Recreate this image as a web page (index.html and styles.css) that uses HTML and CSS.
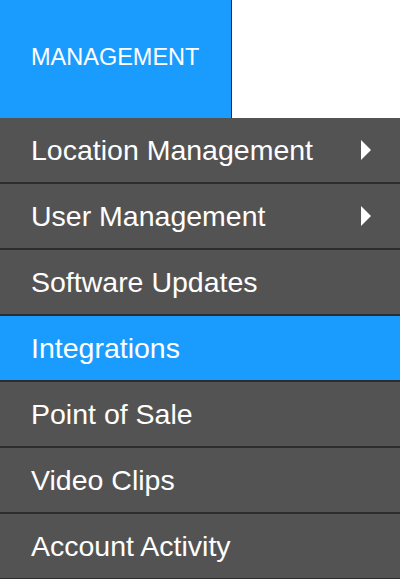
FILE: index.html
```html
<!DOCTYPE html>
<html lang="en">
<head>
<meta charset="utf-8">
<title>Management menu</title>
<link rel="stylesheet" href="styles.css">
</head>
<body>
  <div class="nav-tab">MANAGEMENT</div>
  <ul class="menu">
    <li class="menu-item"><span>Location Management</span><svg class="caret" width="10" height="20" viewBox="0 0 10 20"><path d="M0 0 L10 10 L0 20 Z" fill="#fff"/></svg></li>
    <li class="menu-item"><span>User Management</span><svg class="caret" width="10" height="20" viewBox="0 0 10 20"><path d="M0 0 L10 10 L0 20 Z" fill="#fff"/></svg></li>
    <li class="menu-item"><span>Software Updates</span></li>
    <li class="menu-item active"><span>Integrations</span></li>
    <li class="menu-item"><span>Point of Sale</span></li>
    <li class="menu-item"><span>Video Clips</span></li>
    <li class="menu-item"><span>Account Activity</span></li>
  </ul>
</body>
</html>
```
FILE: styles.css
```css
html, body {
  margin: 0;
  padding: 0;
  background: #ffffff;
  font-family: "Liberation Sans", Arial, Helvetica, sans-serif;
}

.nav-tab {
  box-sizing: border-box;
  width: 232px;
  height: 118px;
  background: #1a9cff;
  border-right: 1px solid #1f2a33;
  color: #ffffff;
  font-size: 23.5px;
  display: flex;
  align-items: center;
  padding-left: 31px;
  padding-bottom: 3px;
}

.menu {
  list-style: none;
  margin: 0;
  padding: 0;
  width: 400px;
}

.menu-item {
  height: 64px;
  border-bottom: 2px solid #2d2d2d;
  background: #535353;
  color: #ffffff;
  font-size: 28.5px;
  display: flex;
  align-items: center;
  justify-content: space-between;
  padding: 0 29px 0 31px;
  box-sizing: content-box;
}

.menu-item.active {
  background: #1a9cff;
}

.caret {
  display: block;
  flex: none;
}
```
